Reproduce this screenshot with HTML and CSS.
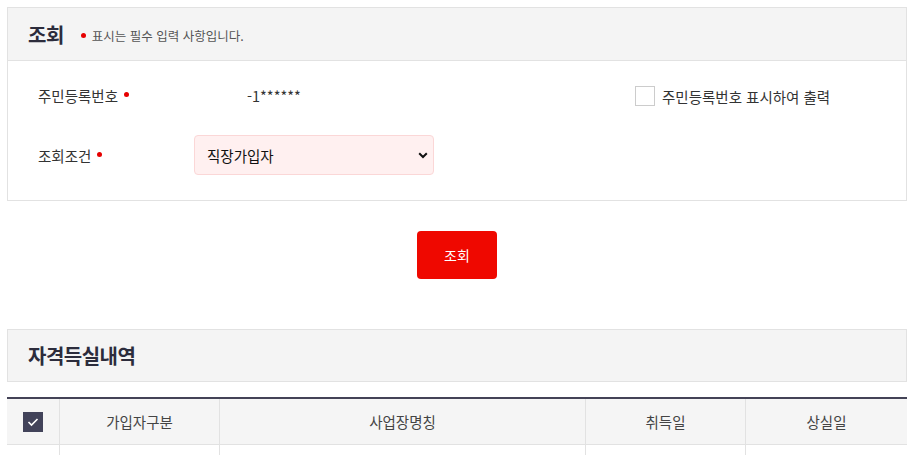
FILE: index.html
```html
<!DOCTYPE html>
<html lang="ko">
<head>
<meta charset="utf-8">
<link rel="stylesheet" href="styles.css">
</head>
<body>
<div class="page">
  <section class="panel">
    <div class="panel-head">
      <h2 class="title">조회</h2>
      <span class="note"><i class="dot"></i>표시는 필수 입력 사항입니다.</span>
    </div>
    <div class="panel-body">
      <div class="row">
        <div class="label">주민등록번호<i class="dot"></i></div>
        <div class="value">-1******</div>
        <label class="check"><span class="box"></span>주민등록번호 표시하여 출력</label>
      </div>
      <div class="row row-select">
        <div class="label">조회조건<i class="dot"></i></div>
        <div class="select">
          <span>직장가입자</span>
          <svg class="chev" width="10" height="7" viewBox="0 0 10 7"><path d="M1.2 1.2 L5 5 L8.8 1.2" fill="none" stroke="#111" stroke-width="2"/></svg>
        </div>
      </div>
    </div>
  </section>

  <div class="actions"><button class="btn">조회</button></div>

  <section class="section2">
    <div class="section-head"><h2 class="title">자격득실내역</h2></div>
  </section>

  <div class="table">
    <div class="tr thead">
      <div class="td c1"><span class="cbox"><svg width="12" height="10" viewBox="0 0 12 10"><path d="M1.5 5 L4.5 8 L10.5 2" fill="none" stroke="#fff" stroke-width="1.6"/></svg></span></div>
      <div class="td c2">가입자구분</div>
      <div class="td c3">사업장명칭</div>
      <div class="td c4">취득일</div>
      <div class="td c5">상실일</div>
    </div>
    <div class="tr tbody">
      <div class="td c1"></div>
      <div class="td c2"></div>
      <div class="td c3"></div>
      <div class="td c4"></div>
      <div class="td c5"></div>
    </div>
  </div>
</div>
</body>
</html>
```

FILE: styles.css
```css
* { box-sizing: border-box; }
html, body { margin: 0; padding: 0; background: #fff; }
body {
  font-family: "Noto Sans CJK KR", "Noto Sans", sans-serif;
  color: #333;
  overflow: hidden;
}
.page {
  width: 900px;
  margin-left: 7px;
  padding-top: 7px;
}
.panel {
  border: 1px solid #e2e2e2;
}
.panel-head {
  height: 53px;
  background: #f4f4f4;
  border-bottom: 1px solid #e2e2e2;
  display: flex;
  align-items: center;
  padding-left: 20px;
}
.title {
  margin: 0;
  font-size: 20px;
  font-weight: 700;
  color: #2c2c3c;
  letter-spacing: -0.5px;
}
.note {
  font-size: 12.5px;
  color: #555;
  margin-left: 17px;
  margin-top: 3px;
  display: flex;
  align-items: center;
}
.dot {
  display: inline-block;
  width: 5px;
  height: 5px;
  border-radius: 50%;
  background: #e60000;
  margin-right: 6px;
}
.label .dot { margin-left: 6px; margin-right: 0; position: relative; top: -1px; }
.panel-body {
  padding: 15px 0 25px 30px;
  height: 139px;
}
.row {
  display: flex;
  align-items: center;
  height: 38px;
}
.row-select { margin-top: 21px; height: 40px; }
.label {
  width: 156px;
  font-size: 14.5px;
  color: #333;
  display: flex;
  align-items: center;
}
.value {
  width: 240px;
  padding-left: 53px;
  font-size: 14.5px;
  color: #333;
}
.check {
  margin-left: 201px;
  display: flex;
  align-items: center;
  font-size: 14.5px;
  color: #333;
  margin-top: 2px;
}
.box {
  width: 20px;
  height: 20px;
  border: 1px solid #ccc;
  background: #fff;
  margin-right: 7px;
}
.select {
  width: 240px;
  height: 40px;
  background: #fff0f0;
  border: 1px solid #fbd7d7;
  border-radius: 4px;
  display: flex;
  align-items: center;
  justify-content: space-between;
  padding: 0 4px 0 12px;
  font-size: 14.5px;
  color: #111;
}
.chev { margin-right: 1px; }
.actions {
  display: flex;
  justify-content: center;
  padding-top: 30px;
  height: 128px;
}
.btn {
  width: 80px;
  height: 48px;
  background: #ef0800;
  border: 0;
  border-radius: 4px;
  color: #fff;
  font-family: inherit;
  font-size: 14px;
  margin-left: 0;
}
.section-head {
  height: 53px;
  background: #f4f4f4;
  border: 1px solid #e2e2e2;
  display: flex;
  align-items: center;
  padding-left: 20px;
}
.table {
  margin-top: 15px;
  border-top: 2px solid #444357;
}
.tr { display: flex; }
.thead { height: 46px; background: #f5f5f5; border-bottom: 1px solid #e2e2e2; }
.tbody { height: 40px; }
.td {
  display: flex;
  align-items: center;
  justify-content: center;
  font-size: 14.5px;
  color: #444;
  border-right: 1px solid #e2e2e2;
}
.td:last-child { border-right: 0; }
.c1 { width: 53px; }
.c2 { width: 160px; }
.c3 { width: 366px; }
.c4 { width: 160px; }
.c5 { flex: 1; }
.cbox {
  width: 20px;
  height: 20px;
  background: #42435a;
  display: flex;
  align-items: center;
  justify-content: center;
  margin-left: -1px;
}
```
